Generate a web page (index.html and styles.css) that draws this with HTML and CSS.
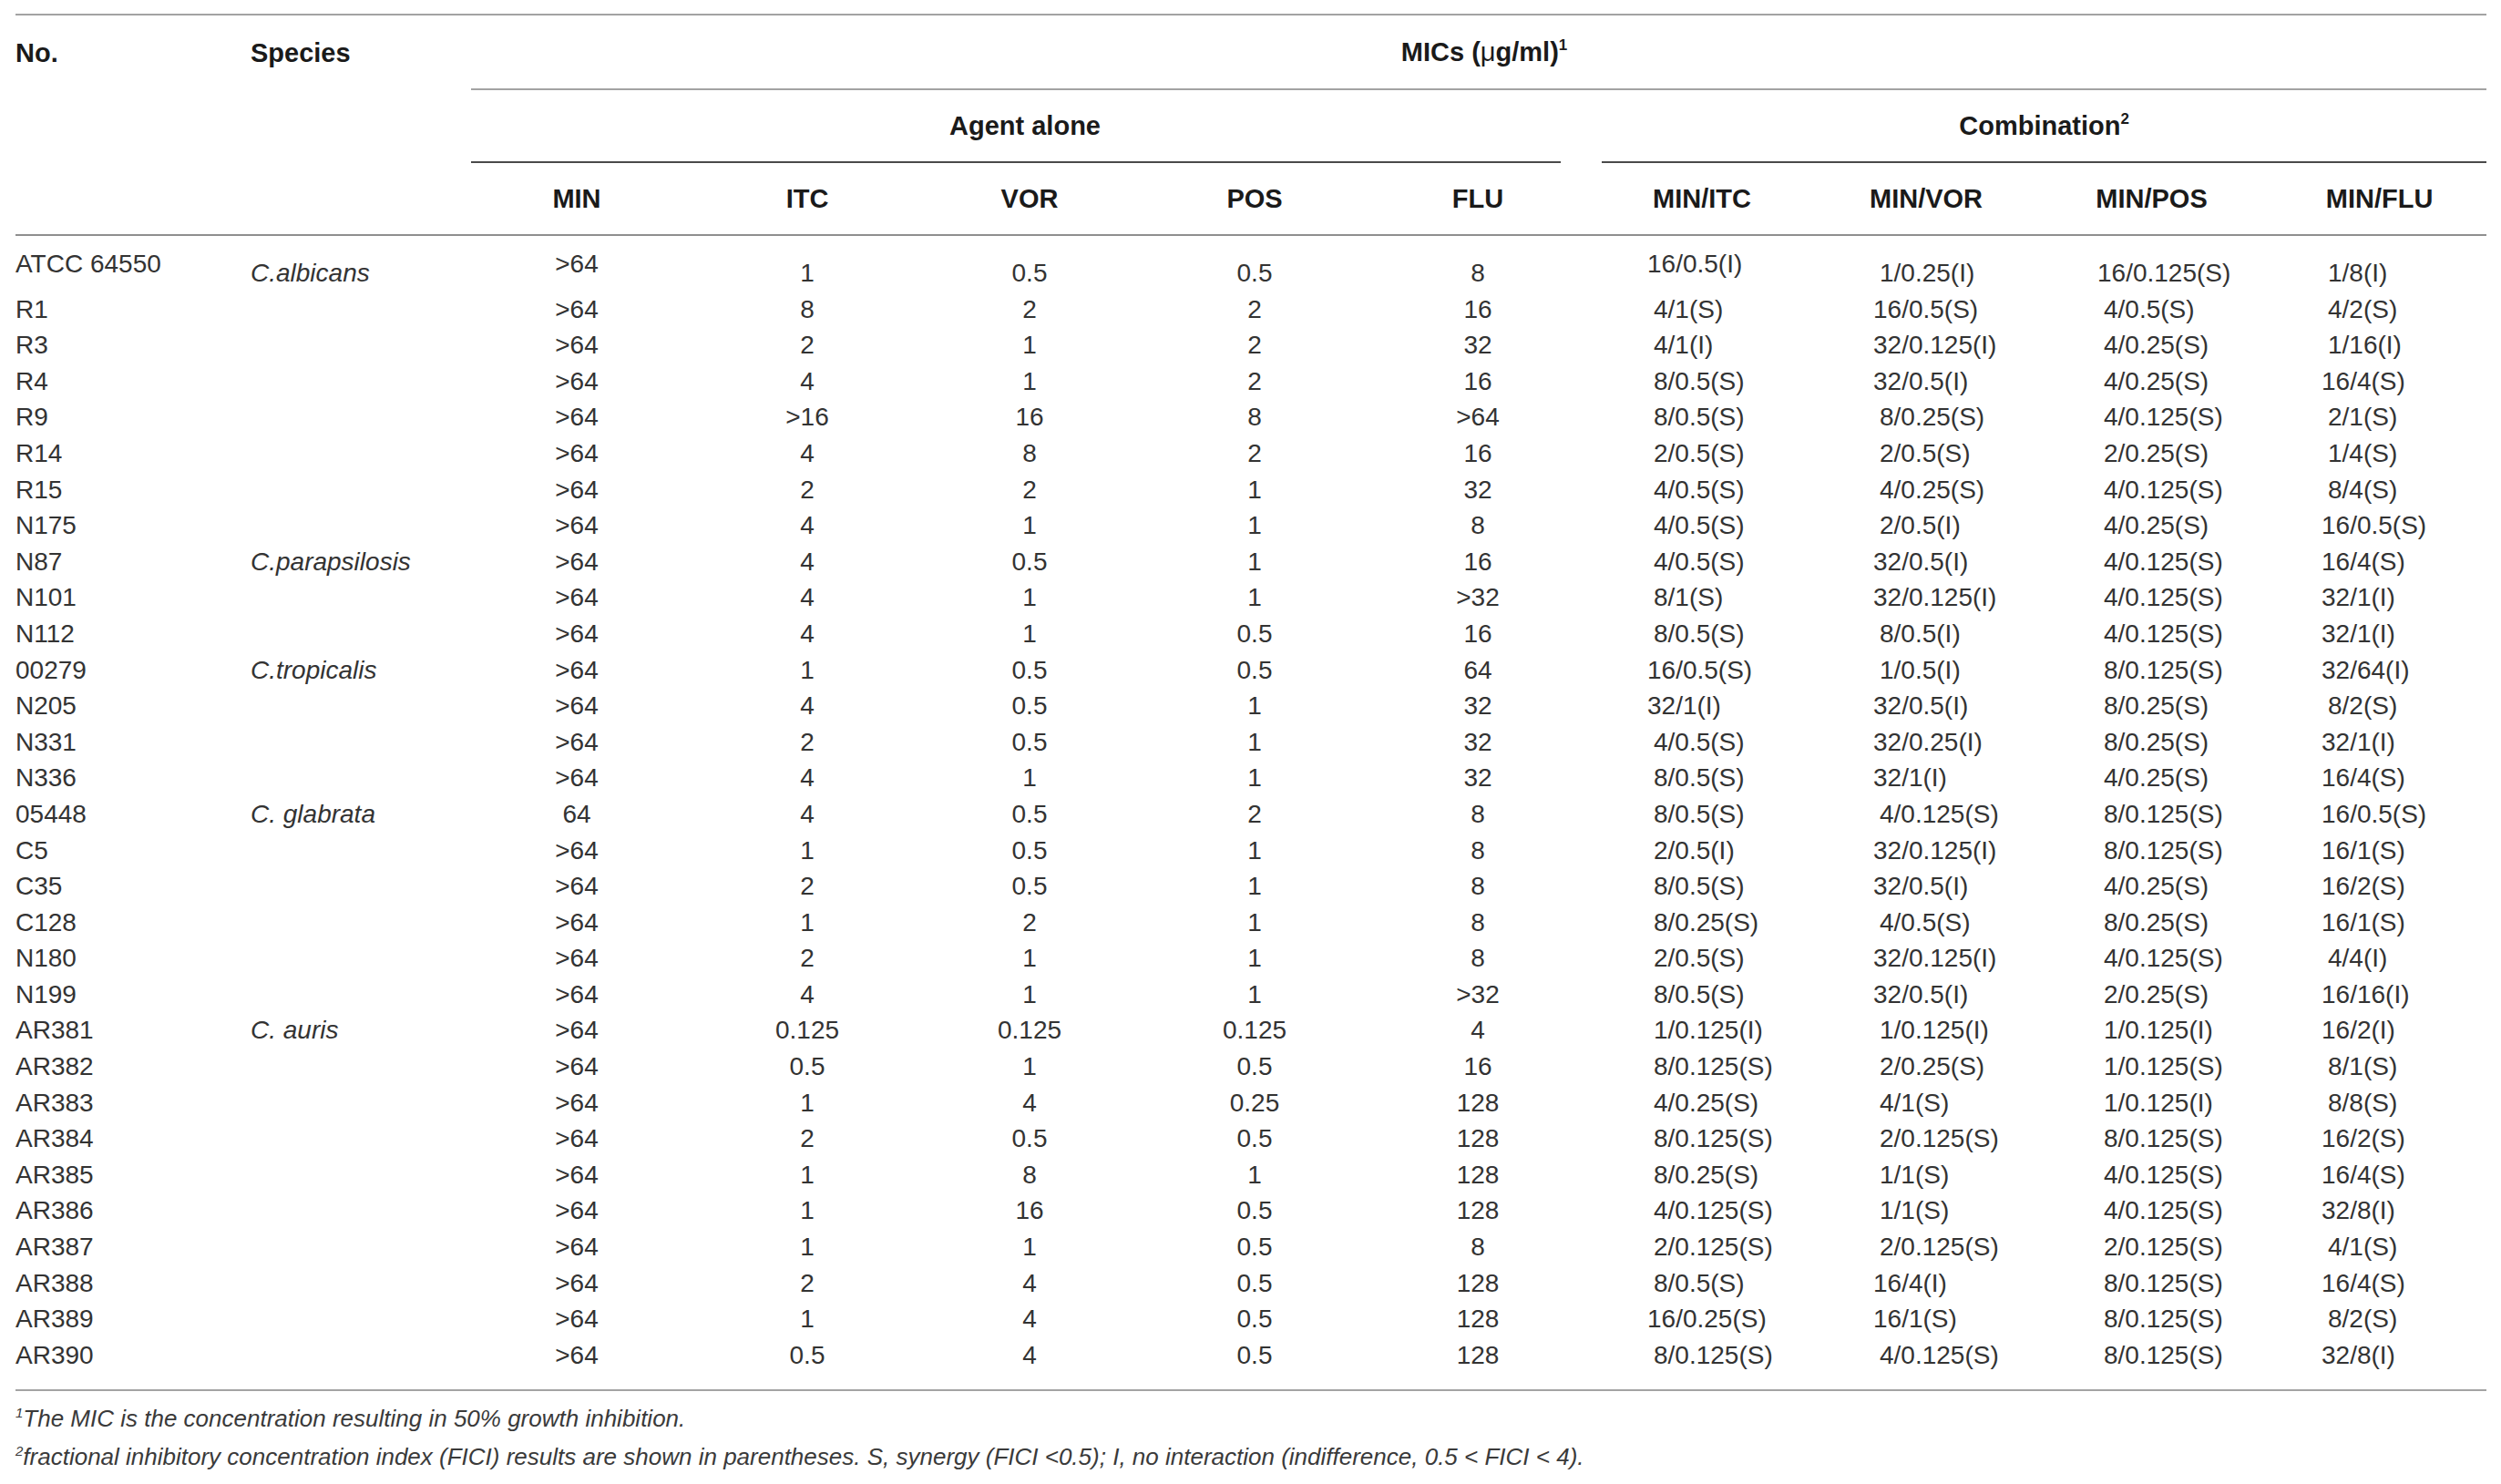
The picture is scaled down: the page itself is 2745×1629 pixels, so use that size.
FILE: index.html
```html
<!DOCTYPE html>
<html lang="en">
<head>
<meta charset="utf-8">
<title>MICs table</title>
<link rel="stylesheet" href="styles.css">
</head>
<body>
<div class="page">
<table class="mic">
<colgroup>
<col class="c-no"><col class="c-sp"><col class="c-min"><col class="c-itc"><col class="c-vor"><col class="c-pos"><col class="c-flu"><col class="c-mi"><col class="c-mv"><col class="c-mp"><col class="c-mf">
</colgroup>
<thead>
<tr class="hr1">
<th class="lt">No.</th><th class="lt">Species</th><th colspan="9" class="mics">MICs (<span class="mu">μ</span>g/ml)<sup>1</sup></th>
</tr>
<tr class="hr2">
<th></th><th></th>
<th colspan="5" class="grp agent"><div>Agent alone</div></th>
<th colspan="4" class="grp comb"><div>Combination<sup>2</sup></div></th>
</tr>
<tr class="hr3">
<th></th><th></th><th>MIN</th><th>ITC</th><th>VOR</th><th>POS</th><th>FLU</th><th>MIN/ITC</th><th>MIN/VOR</th><th>MIN/POS</th><th>MIN/FLU</th>
</tr>
</thead>
<tbody>
<tr class="first"><td class="hi">ATCC 64550</td><td class="sp">C.albicans</td><td class="hi">&gt;64</td><td>1</td><td>0.5</td><td>0.5</td><td>8</td><td class="hi w">16/0.5(I)</td><td>1/0.25(I)</td><td class="w">16/0.125(S)</td><td>1/8(I)</td></tr>
<tr><td>R1</td><td></td><td>&gt;64</td><td>8</td><td>2</td><td>2</td><td>16</td><td>4/1(S)</td><td class="w">16/0.5(S)</td><td>4/0.5(S)</td><td>4/2(S)</td></tr>
<tr><td>R3</td><td></td><td>&gt;64</td><td>2</td><td>1</td><td>2</td><td>32</td><td>4/1(I)</td><td class="w">32/0.125(I)</td><td>4/0.25(S)</td><td>1/16(I)</td></tr>
<tr><td>R4</td><td></td><td>&gt;64</td><td>4</td><td>1</td><td>2</td><td>16</td><td>8/0.5(S)</td><td class="w">32/0.5(I)</td><td>4/0.25(S)</td><td class="w">16/4(S)</td></tr>
<tr><td>R9</td><td></td><td>&gt;64</td><td>&gt;16</td><td>16</td><td>8</td><td>&gt;64</td><td>8/0.5(S)</td><td>8/0.25(S)</td><td>4/0.125(S)</td><td>2/1(S)</td></tr>
<tr><td>R14</td><td></td><td>&gt;64</td><td>4</td><td>8</td><td>2</td><td>16</td><td>2/0.5(S)</td><td>2/0.5(S)</td><td>2/0.25(S)</td><td>1/4(S)</td></tr>
<tr><td>R15</td><td></td><td>&gt;64</td><td>2</td><td>2</td><td>1</td><td>32</td><td>4/0.5(S)</td><td>4/0.25(S)</td><td>4/0.125(S)</td><td>8/4(S)</td></tr>
<tr><td>N175</td><td></td><td>&gt;64</td><td>4</td><td>1</td><td>1</td><td>8</td><td>4/0.5(S)</td><td>2/0.5(I)</td><td>4/0.25(S)</td><td class="w">16/0.5(S)</td></tr>
<tr><td>N87</td><td class="sp">C.parapsilosis</td><td>&gt;64</td><td>4</td><td>0.5</td><td>1</td><td>16</td><td>4/0.5(S)</td><td class="w">32/0.5(I)</td><td>4/0.125(S)</td><td class="w">16/4(S)</td></tr>
<tr><td>N101</td><td></td><td>&gt;64</td><td>4</td><td>1</td><td>1</td><td>&gt;32</td><td>8/1(S)</td><td class="w">32/0.125(I)</td><td>4/0.125(S)</td><td class="w">32/1(I)</td></tr>
<tr><td>N112</td><td></td><td>&gt;64</td><td>4</td><td>1</td><td>0.5</td><td>16</td><td>8/0.5(S)</td><td>8/0.5(I)</td><td>4/0.125(S)</td><td class="w">32/1(I)</td></tr>
<tr><td>00279</td><td class="sp">C.tropicalis</td><td>&gt;64</td><td>1</td><td>0.5</td><td>0.5</td><td>64</td><td class="w">16/0.5(S)</td><td>1/0.5(I)</td><td>8/0.125(S)</td><td class="w">32/64(I)</td></tr>
<tr><td>N205</td><td></td><td>&gt;64</td><td>4</td><td>0.5</td><td>1</td><td>32</td><td class="w">32/1(I)</td><td class="w">32/0.5(I)</td><td>8/0.25(S)</td><td>8/2(S)</td></tr>
<tr><td>N331</td><td></td><td>&gt;64</td><td>2</td><td>0.5</td><td>1</td><td>32</td><td>4/0.5(S)</td><td class="w">32/0.25(I)</td><td>8/0.25(S)</td><td class="w">32/1(I)</td></tr>
<tr><td>N336</td><td></td><td>&gt;64</td><td>4</td><td>1</td><td>1</td><td>32</td><td>8/0.5(S)</td><td class="w">32/1(I)</td><td>4/0.25(S)</td><td class="w">16/4(S)</td></tr>
<tr><td>05448</td><td class="sp">C. glabrata</td><td>64</td><td>4</td><td>0.5</td><td>2</td><td>8</td><td>8/0.5(S)</td><td>4/0.125(S)</td><td>8/0.125(S)</td><td class="w">16/0.5(S)</td></tr>
<tr><td>C5</td><td></td><td>&gt;64</td><td>1</td><td>0.5</td><td>1</td><td>8</td><td>2/0.5(I)</td><td class="w">32/0.125(I)</td><td>8/0.125(S)</td><td class="w">16/1(S)</td></tr>
<tr><td>C35</td><td></td><td>&gt;64</td><td>2</td><td>0.5</td><td>1</td><td>8</td><td>8/0.5(S)</td><td class="w">32/0.5(I)</td><td>4/0.25(S)</td><td class="w">16/2(S)</td></tr>
<tr><td>C128</td><td></td><td>&gt;64</td><td>1</td><td>2</td><td>1</td><td>8</td><td>8/0.25(S)</td><td>4/0.5(S)</td><td>8/0.25(S)</td><td class="w">16/1(S)</td></tr>
<tr><td>N180</td><td></td><td>&gt;64</td><td>2</td><td>1</td><td>1</td><td>8</td><td>2/0.5(S)</td><td class="w">32/0.125(I)</td><td>4/0.125(S)</td><td>4/4(I)</td></tr>
<tr><td>N199</td><td></td><td>&gt;64</td><td>4</td><td>1</td><td>1</td><td>&gt;32</td><td>8/0.5(S)</td><td class="w">32/0.5(I)</td><td>2/0.25(S)</td><td class="w">16/16(I)</td></tr>
<tr><td>AR381</td><td class="sp">C. auris</td><td>&gt;64</td><td>0.125</td><td>0.125</td><td>0.125</td><td>4</td><td>1/0.125(I)</td><td>1/0.125(I)</td><td>1/0.125(I)</td><td class="w">16/2(I)</td></tr>
<tr><td>AR382</td><td></td><td>&gt;64</td><td>0.5</td><td>1</td><td>0.5</td><td>16</td><td>8/0.125(S)</td><td>2/0.25(S)</td><td>1/0.125(S)</td><td>8/1(S)</td></tr>
<tr><td>AR383</td><td></td><td>&gt;64</td><td>1</td><td>4</td><td>0.25</td><td>128</td><td>4/0.25(S)</td><td>4/1(S)</td><td>1/0.125(I)</td><td>8/8(S)</td></tr>
<tr><td>AR384</td><td></td><td>&gt;64</td><td>2</td><td>0.5</td><td>0.5</td><td>128</td><td>8/0.125(S)</td><td>2/0.125(S)</td><td>8/0.125(S)</td><td class="w">16/2(S)</td></tr>
<tr><td>AR385</td><td></td><td>&gt;64</td><td>1</td><td>8</td><td>1</td><td>128</td><td>8/0.25(S)</td><td>1/1(S)</td><td>4/0.125(S)</td><td class="w">16/4(S)</td></tr>
<tr><td>AR386</td><td></td><td>&gt;64</td><td>1</td><td>16</td><td>0.5</td><td>128</td><td>4/0.125(S)</td><td>1/1(S)</td><td>4/0.125(S)</td><td class="w">32/8(I)</td></tr>
<tr><td>AR387</td><td></td><td>&gt;64</td><td>1</td><td>1</td><td>0.5</td><td>8</td><td>2/0.125(S)</td><td>2/0.125(S)</td><td>2/0.125(S)</td><td>4/1(S)</td></tr>
<tr><td>AR388</td><td></td><td>&gt;64</td><td>2</td><td>4</td><td>0.5</td><td>128</td><td>8/0.5(S)</td><td class="w">16/4(I)</td><td>8/0.125(S)</td><td class="w">16/4(S)</td></tr>
<tr><td>AR389</td><td></td><td>&gt;64</td><td>1</td><td>4</td><td>0.5</td><td>128</td><td class="w">16/0.25(S)</td><td class="w">16/1(S)</td><td>8/0.125(S)</td><td>8/2(S)</td></tr>
<tr><td>AR390</td><td></td><td>&gt;64</td><td>0.5</td><td>4</td><td>0.5</td><td>128</td><td>8/0.125(S)</td><td>4/0.125(S)</td><td>8/0.125(S)</td><td class="w">32/8(I)</td></tr>
</tbody>
</table>
<div class="notes">
<p><sup>1</sup>The MIC is the concentration resulting in 50% growth inhibition.</p>
<p><sup>2</sup>fractional inhibitory concentration index (FICI) results are shown in parentheses. S, synergy (FICI &lt;0.5); I, no interaction (indifference, 0.5 &lt; FICI &lt; 4).</p>
</div>
</div>
</body>
</html>
```
FILE: styles.css
```css
html, body {
  margin: 0;
  padding: 0;
  background: #ffffff;
}
body {
  font-family: "Liberation Sans", Arial, Helvetica, sans-serif;
  color: #333333;
}
.page {
  padding: 15px 16px 0 17px;
}
table.mic {
  border-collapse: separate;
  border-spacing: 0;
  table-layout: fixed;
  width: 2712px;
  font-size: 28px;
  border-top: 2px solid #a3a3a3;
  border-bottom: 2px solid #a3a3a3;
}
.c-no { width: 258px; }
.c-sp { width: 242px; }
.c-min { width: 232px; }
.c-itc { width: 274px; }
.c-vor { width: 214px; }
.c-pos { width: 280px; }
.c-flu { width: 210px; }
.c-mi { width: 264px; }
.c-mv { width: 246px; }
.c-mp { width: 249px; }
.c-mf { width: 243px; }

th {
  font-weight: bold;
  font-size: 29px;
  color: #1a1a1a;
  padding: 0;
  text-align: center;
  vertical-align: middle;
  white-space: nowrap;
}
th sup {
  font-size: 17px;
  line-height: 0;
  vertical-align: 12px;
}
th .mu {
  font-weight: normal;
}
.hr1 th {
  line-height: 80px;
}
.hr1 th.lt {
  text-align: left;
}
.hr1 th.mics {
  border-bottom: 2px solid #a3a3a3;
  padding-left: 12px;
}
.hr2 th {
  line-height: 78px;
  vertical-align: bottom;
}
.hr2 th.grp div {
  line-height: 78px;
  border-bottom: 2px solid #4a4a4a;
}
.hr2 th.agent {
  padding-right: 14px;
}
.hr2 th.agent div {
  padding-left: 20px;
}
.hr2 th.comb {
  padding-left: 31px;
}
.hr3 th {
  line-height: 78px;
  border-bottom: 2px solid #8f8f8f;
}
.hr3 th:nth-child(8) {
  padding-left: 18px;
}
.hr3 th:nth-child(11) {
  padding-left: 8px;
}

td {
  padding: 0;
  line-height: 39.6px;
  vertical-align: top;
  white-space: nowrap;
  text-align: left;
}
td:nth-child(n+3):nth-child(-n+7) {
  text-align: center;
}
td:nth-child(8) { padding-left: 88px; }
td:nth-child(9) { padding-left: 72px; }
td:nth-child(10) { padding-left: 72px; }
td:nth-child(11) { padding-left: 69px; }
td.w {
  text-indent: -7px;
}
td.sp {
  font-style: italic;
}
tr.first td {
  padding-top: 21px;
}
tr.first td.hi {
  padding-top: 11px;
}
tbody tr:last-child td {
  padding-bottom: 18px;
}

.notes {
  margin-top: 9px;
  font-size: 26px;
  font-style: italic;
  color: #3a3a3a;
}
.notes p {
  margin: 0;
  line-height: 42px;
  white-space: nowrap;
}
.notes sup {
  font-size: 15px;
  line-height: 0;
  vertical-align: 10px;
}
```
